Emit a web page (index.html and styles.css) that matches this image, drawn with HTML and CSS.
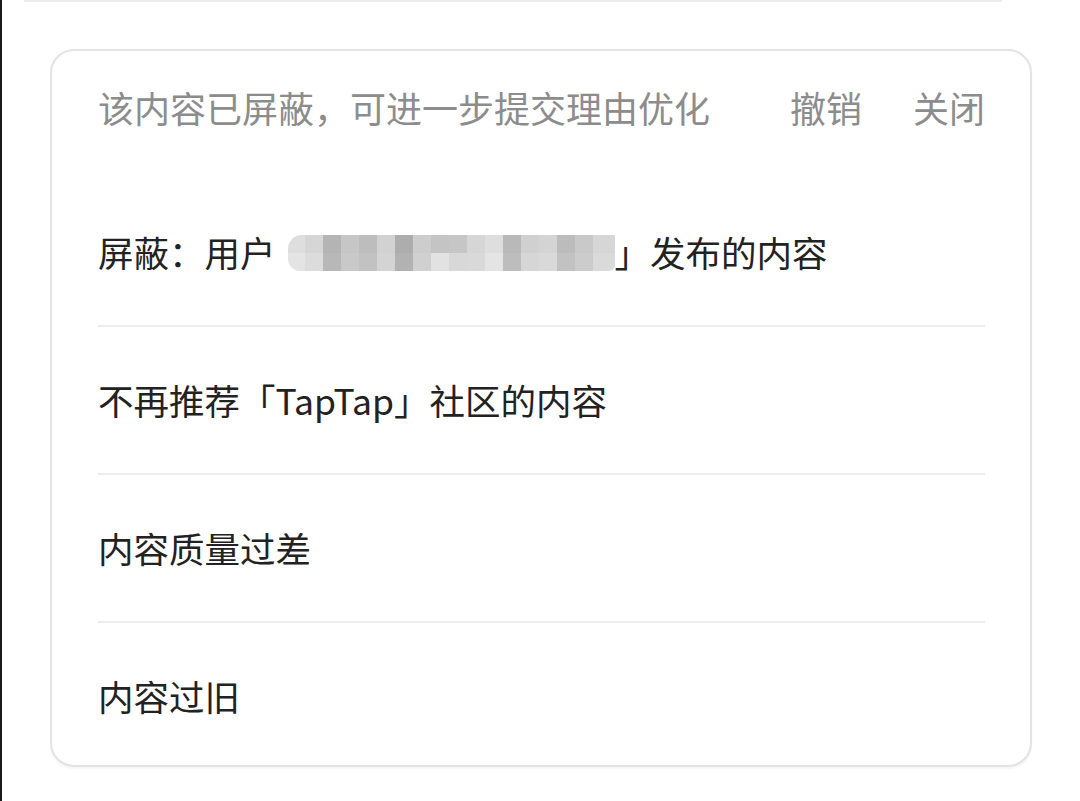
FILE: index.html
```html
<!DOCTYPE html>
<html lang="zh-CN">
<head>
<meta charset="utf-8">
<link rel="stylesheet" href="styles.css">
</head>
<body>
<div class="page">
  <div class="topline"></div>
  <div class="card">
    <div class="header">
      <span class="notice">该内容已屏蔽，可进一步提交理由优化</span>
      <div class="actions">
        <span class="action">撤销</span>
        <span class="action">关闭</span>
      </div>
    </div>
    <div class="row">
      <span class="label">屏蔽：用户</span>
      <span class="blur">
        <span class="blur-row top"></span>
        <span class="blur-row bottom"></span>
      </span>
      <span class="label">」发布的内容</span>
    </div>
    <div class="row">
      <span class="label">不再推荐「TapTap」社区的内容</span>
    </div>
    <div class="row">
      <span class="label">内容质量过差</span>
    </div>
    <div class="row last">
      <span class="label">内容过旧</span>
    </div>
  </div>
</div>
</body>
</html>
```

FILE: styles.css
```css
html, body {
  margin: 0;
  padding: 0;
  background: #ffffff;
}

body {
  font-family: "Noto Sans CJK SC", "Noto Sans", sans-serif;
  width: 1080px;
  height: 801px;
  overflow: hidden;
}

.page {
  box-sizing: border-box;
  height: 801px;
  border-left: 2px solid #1a1a1a;
  padding-left: 48px;
}

.topline {
  height: 2px;
  background: #ebebeb;
  margin-left: -26px;
  margin-right: 78px;
}

.card {
  box-sizing: border-box;
  margin-top: 47px;
  width: 982px;
  height: 718px;
  border: 2px solid #e3e3e3;
  border-radius: 24px;
  padding: 0 45px 0 46px;
  box-shadow: 0 2px 2px rgba(0, 0, 0, 0.04);
}

.header {
  box-sizing: border-box;
  display: flex;
  align-items: center;
  justify-content: space-between;
  height: 128px;
  padding-bottom: 16px;
  font-size: 36px;
  color: #8c8c8c;
  line-height: 1;
}

.actions {
  display: flex;
  gap: 51px;
}

.row {
  display: flex;
  align-items: center;
  height: 146px;
  border-bottom: 2px solid #ededed;
  font-size: 35.5px;
  color: #222222;
  line-height: 1;
}

.row.last {
  border-bottom: none;
}

.label {
  white-space: nowrap;
}

.blur {
  display: inline-flex;
  flex-direction: column;
  width: 327px;
  height: 36px;
  margin-left: 12px;
  margin-top: 2px;
  border-radius: 14px 0 6px 12px;
  overflow: hidden;
}

.blur-row {
  display: block;
  height: 18px;
}

.blur-row.top {
  background: linear-gradient(90deg,
    #dedede 0 17px, #d6d6d6 17px 35px, #b4b4b4 35px 53px, #c6c6c6 53px 71px,
    #bdbdbd 71px 89px, #d2d2d2 89px 107px, #adadad 107px 125px, #cdcdcd 125px 143px,
    #c4c4c4 143px 161px, #c6c6c6 161px 179px, #d6d6d6 179px 197px, #dedede 197px 215px,
    #b9b9b9 215px 233px, #d0d0d0 233px 251px, #d4d4d4 251px 269px, #bcbcbc 269px 287px,
    #c9c9c9 287px 305px, #d6d6d6 305px 327px);
}

.blur-row.bottom {
  background: linear-gradient(90deg,
    #e4e4e4 0 17px, #dcdcdc 17px 35px, #b8b8b8 35px 53px, #c9c9c9 53px 71px,
    #c2c2c2 71px 89px, #d4d4d4 89px 107px, #b2b2b2 107px 125px, #d0d0d0 125px 143px,
    #e2e2e2 143px 161px, #d8d8d8 161px 179px, #d9d9d9 179px 197px, #e4e4e4 197px 215px,
    #bdbdbd 215px 233px, #d6d6d6 233px 251px, #d9d9d9 251px 269px, #c2c2c2 269px 287px,
    #cccccc 287px 305px, #dadada 305px 327px);
}
```
